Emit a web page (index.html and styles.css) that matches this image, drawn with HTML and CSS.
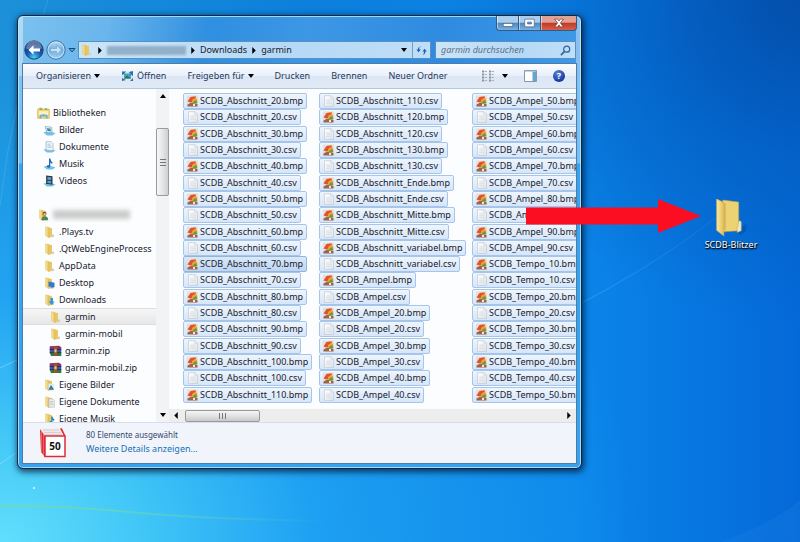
FILE: index.html
```html
<!DOCTYPE html>
<html lang="de">
<head>
<meta charset="utf-8">
<meta name="viewport" content="width=device-width, initial-scale=1">
<title>garmin</title>
<link rel="stylesheet" href="styles.css">
</head>
<body>
<svg class="defs" aria-hidden="true">
  <defs>
    <linearGradient id="gold" x1="0" x2="1"><stop offset="0" stop-color="#fbeaa0"/><stop offset="1" stop-color="#e3bd52"/></linearGradient>
    <linearGradient id="paper" x1="0" x2="1" y2="1"><stop offset="0" stop-color="#fff"/><stop offset="1" stop-color="#dfe5ec"/></linearGradient>
    <radialGradient id="back" cx=".5" cy=".9" r=".8"><stop offset="0" stop-color="#3fd4f8"/><stop offset=".45" stop-color="#1a5fb8"/><stop offset="1" stop-color="#16306f"/></radialGradient>
    <linearGradient id="fwd" y2="1" x2="0"><stop offset="0" stop-color="#bcdcf5"/><stop offset=".5" stop-color="#6aaee3"/><stop offset="1" stop-color="#a5d4f6"/></linearGradient>
    <linearGradient id="fade"><stop offset="0" stop-color="#74dca0" stop-opacity=".8"/><stop offset="1" stop-color="#74dca0" stop-opacity="0"/></linearGradient>
    <linearGradient id="fade2"><stop offset="0" stop-color="#5cc0f8" stop-opacity=".4"/><stop offset="1" stop-color="#5cc0f8" stop-opacity="0"/></linearGradient>
  </defs>
  <symbol id="folder" viewBox="0 0 12 12"><path d="M5 1.500l3.500.5V9l1.500.300V11L5 11.400z" fill="#e9c765"/><path d="M2 .8L5.500 1.600v10.200L2 9.600z" fill="url(#gold)" stroke="#d8b65c" stroke-width=".4"/><path d="M8 8.500h2.400v2.500H8z" fill="#cfd2c0"/></symbol>
  <symbol id="bmp" viewBox="0 0 12 12"><rect x=".5" y=".5" width="11" height="11" fill="#e4dfd8"/><path d="M1 6.500L4 2l5-.8 1.500 5L6 6.500l-2 1z" fill="#e3502d"/><path d="M5.500 5L9 2.500 11 6l-1 2H6z" fill="#f0a32c"/><path d="M6.500 7L9.500 5 11 8l-4 1z" fill="#5f9f3b"/><path d="M1 9.500L5 7.500l6 1.500v2.500H1z" fill="#9b654c"/><path d="M6.500 8.700h2v2.300h-2z" fill="#f7e7cf"/></symbol>
  <symbol id="csv" viewBox="0 0 12 12"><path d="M2 .7h6.500L11 3.200v8.200H2z" fill="url(#paper)" stroke="#c2c8cf" stroke-width=".7"/><path d="M8.300.8V3.400H11M3.600 5h5.600M3.600 6.800h5.600M3.600 8.600h5.600" fill="none" stroke="#cdd3da" stroke-width=".6"/></symbol>
  <symbol id="libs" viewBox="0 0 13 12"><path d="M.6 2.500L2 1h3l1 1h6.300v9.300H.6z" fill="#f1d574" stroke="#d0a848" stroke-width=".6"/><path d="M2 3l2-2 1.500 2zM7 2.500L9 .8 11 3z" fill="#77b267"/><path d="M1.800 4.200h9.400V8H1.800z" fill="#fbf1b9"/><path d="M2.600 11.500V9q0-1.800 4-1.800t4 1.800v2.500H9V9.600H4.200v1.900z" fill="#64b2df"/></symbol>
  <symbol id="pictures" viewBox="0 0 13 12"><path d="M.5 8.500L4.500 7l8 2-3 2.500H4z" fill="#70c0e8"/><path d="M2 2.500l6.500.7.600 5L4 8.600z" fill="#eaf4fa" stroke="#78a5c2" stroke-width=".7"/><path d="M3.600 4l4 .4.400 2.600-3.600-.2z" fill="#479bc7"/><path d="M4.300 7l1.700-1.400 2 1.600z" fill="#477f55"/></symbol>
  <symbol id="documents" viewBox="0 0 13 12"><path d="M.5 8.700L5 7.500l7.500 1.700-3 2.400H4z" fill="#70c0e8"/><path d="M3 .7h5l2 2v7L3 9z" fill="#f2f7fb" stroke="#8faebf" stroke-width=".7"/><path d="M4.400 3.200h3M4.400 4.800H8.500M4.400 6.400H8.500" stroke="#86aac2" stroke-width=".6"/></symbol>
  <symbol id="music" viewBox="0 0 13 12"><path d="M.5 8.700L5 7.500l7.500 1.700-3 2.400H4z" fill="#70c0e8"/><path d="M6 .5h1.300Q7.500 2.500 9.600 4.600L9 6 7.300 4.200v4.300Q6.800 10 4.800 9.600 3 8.800 4.200 7.600 5 7 6 7.300z" fill="#1e69bd"/></symbol>
  <symbol id="videos" viewBox="0 0 13 12"><path d="M.5 8.700L5 7.500l7.500 1.700-3 2.400H4z" fill="#70c0e8"/><path d="M3 .5l6.500.8v8.500L3 8.700z" fill="#26333f"/><path d="M4.400 1.800l3.600.4v2.700l-3.600-.2zM4.400 5.600l3.600.3v2.500L4.400 8z" fill="#5d9dcb"/><path d="M3.600 1.400v7M8.900 2v7" stroke="#a6b5c2" stroke-width=".5" stroke-dasharray=".7"/></symbol>
  <symbol id="user" viewBox="0 0 12 12"><use href="#folder"/><circle cx="7" cy="4.800" r="2" fill="#7a5637"/><circle cx="7.200" cy="5.300" r="1.200" fill="#e7b688"/><path d="M4 11.200q0-4 3.200-4t3.600 4z" fill="#4a8754"/></symbol>
  <symbol id="f-desktop" viewBox="0 0 12 12"><use href="#folder"/><path d="M5 4.500l6 1.200v4.600L5 9.500z" fill="#3676cb"/><path d="M7 10h3v1.300H7z" fill="#6ba5e0"/></symbol>
  <symbol id="f-down" viewBox="0 0 12 12"><use href="#folder"/><path d="M7 4h2.400v3.500H11L8.200 11 5.200 7.500H7z" fill="#2a93e2"/></symbol>
  <symbol id="f-pic" viewBox="0 0 12 12"><use href="#folder"/><path d="M5 4.500l5.500.8v5.400H5z" fill="#dcebf2"/><path d="M5.500 9.800L7.500 6l3 4.700H5z" fill="#2f7998"/></symbol>
  <symbol id="f-doc" viewBox="0 0 12 12"><use href="#folder"/><path d="M5.500 3h4.200l1.300 1.500v6.700H5.500z" fill="#e9edef" stroke="#a9b4ba" stroke-width=".5"/><path d="M6.500 5.500h3.300M6.500 7h3.300M6.500 8.500h3.300" stroke="#9fafb8" stroke-width=".5"/></symbol>
  <symbol id="f-music" viewBox="0 0 12 12"><use href="#folder"/><path d="M7.800 3.600H9q.2 1.800 2 3L10.500 8 9 6.800V9.500q-.8 1.700-2.800 1-1-1.200.3-2.200.6-.3 1.300-.1z" fill="#1f7fcb"/></symbol>
  <symbol id="zip" viewBox="0 0 13 12"><path d="M.7 1.200L10 .8l2.300 1.500v2.200H.7z" fill="#8d3268"/><path d="M.7 4.600h11.600v3H.7z" fill="#3655b4"/><path d="M.7 7.700h11.600v3.200H2z" fill="#2d7a3c"/><path d="M.7 4.500h11.600M.7 7.600h11.600" stroke="#1d1d2b" stroke-width=".8"/><path d="M5 .9h3v10H5z" fill="#a2522a"/><path d="M5.500 4.300h2v3h-2z" fill="#e5ca73"/></symbol>
</svg>

<main class="desktop">
  <svg class="streaks" viewBox="0 0 800 542" preserveAspectRatio="none" aria-hidden="true">
    <path d="M582 303Q700 240 765 174" fill="none" stroke="url(#fade2)"/>
    <path d="M0 206Q12 100 48 0" fill="none" stroke="#8fdcf5" stroke-opacity=".2"/>
    <path d="M0 368L17 360M0 464L20 450" stroke="#a0eafa" stroke-opacity=".5"/>
    <path d="M0 506Q60 505 130 512T330 521" fill="none" stroke="url(#fade)" stroke-width="2"/>
    <path d="M720 542Q770 525 800 500V542z" fill="#2c92ee" fill-opacity=".15"/>
    <circle cx="34" cy="488" r="1" fill="#d5f8ff"/>
  </svg>

  <section class="window" aria-label="garmin">
    <header class="caption">
      <button class="cap" aria-label="Minimieren"><svg viewBox="0 0 22 14"><rect x="6.500" y="7.500" width="10" height="3" fill="#fff" stroke="#49627f" stroke-width=".7"/></svg></button>
      <button class="cap" aria-label="Maximieren"><svg viewBox="0 0 22 14"><path d="M6 3h10v8H6zM9 6v2h4V6z" fill="#fff" fill-rule="evenodd" stroke="#49627f" stroke-width=".7"/></svg></button>
      <button class="cap close" aria-label="Schließen"><svg viewBox="0 0 36 14"><path d="M14 3h3l1.500 2L20 3h3l-3 4 3 4h-3l-1.500-2L17 11h-3l3-4z" fill="#fff" stroke="#6a3434" stroke-width=".7"/></svg></button>
    </header>

    <nav class="navrow" aria-label="Navigation">
      <button class="round" aria-label="Zurück"><svg viewBox="0 0 20 20"><circle cx="10" cy="10" r="9.200" fill="url(#back)" stroke="#24446f"/><path d="M2 8.500a8 8 0 0 1 16 0q-8 3-16 0z" fill="#fff" fill-opacity=".32"/><path d="M4.500 10L9.500 5.200V8.500H16v3H9.500v3.300z" fill="#fff"/></svg></button>
      <button class="round" aria-label="Vorwärts"><svg viewBox="0 0 20 20"><circle cx="10" cy="10" r="9.200" fill="url(#fwd)" stroke="#45719c"/><circle cx="10" cy="10" r="8" fill="none" stroke="#d7ecfb" stroke-opacity=".7"/><path d="M15.500 10L10.500 5.200V8.500H4.500v3h6v3.300z" fill="#c7e2f6" stroke="#5e97c9" stroke-width=".5"/></svg></button>
      <button class="recent" aria-label="Verlauf"><svg viewBox="0 0 8 6"><path d="M1 1.500h6L4 5z" fill="#5ba6e2" stroke="#1d4a7c"/></svg></button>
      <div class="address">
        <svg class="ic"><use href="#folder"/></svg>
        <svg class="tri" viewBox="0 0 4 8"><path d="M0 0l4 4-4 4z"/></svg>
        <span class="smudge"></span>
        <svg class="tri" viewBox="0 0 4 8"><path d="M0 0l4 4-4 4z"/></svg>
        <button class="crumb">Downloads</button>
        <svg class="tri" viewBox="0 0 4 8"><path d="M0 0l4 4-4 4z"/></svg>
        <button class="crumb">garmin</button>
        <button class="drop" aria-label="Vorherige Orte"><svg class="caret" viewBox="0 0 6 4"><path d="M0 0h6L3 4z"/></svg></button>
        <button class="refresh" aria-label="Aktualisieren"><svg viewBox="0 0 12 12"><path d="M6 1.500Q3.500 1 3.500 5H5.200L2.800 8 .4 5h1.700Q2 1.500 6 1.500zM6.500 10.500q2.200.3 2.200-3.500H7L9.400 4l2.400 3h-1.700q0 4-3.600 3.500z" fill="#1e5fb0"/></svg></button>
      </div>
      <label class="search"><input type="search" placeholder="garmin durchsuchen" aria-label="garmin durchsuchen"><svg viewBox="0 0 12 12"><circle cx="7.300" cy="4.500" r="3.300" fill="none" stroke="#28649f" stroke-width="1.300"/><path d="M5 7L1 11" stroke="#28649f" stroke-width="1.800"/></svg></label>
    </nav>

    <div class="client">
      <div class="toolbar" role="toolbar">
        <button>Organisieren <svg class="caret" viewBox="0 0 6 4"><path d="M0 0h6L3 4z"/></svg></button>
        <button><svg class="ic open" viewBox="0 0 13 12"><path d="M1 1.500h11v8H1z" fill="#cfe6f3"/><path d="M1 1.500h4L3 4 1 5zM12 1v5L9 4 8 2zM1 11V8l4 2zM9 11l3-3v3z" fill="#2a6fae"/><path d="M3 3.500h7v5H3z" fill="#4d9cc6"/><path d="M3 8.500l3-3 4 3z" fill="#2c7448"/></svg>Öffnen</button>
        <button>Freigeben für <svg class="caret" viewBox="0 0 6 4"><path d="M0 0h6L3 4z"/></svg></button>
        <button>Drucken</button>
        <button>Brennen</button>
        <button>Neuer Ordner</button>
        <div class="tools">
          <button aria-label="Ansicht ändern"><svg class="view" viewBox="0 0 14 12"><path d="M1 1.500h2M1 4.500h2M1 7.500h2M1 10.500h2M8 1.500h2M8 4.500h2M8 7.500h2M8 10.500h2" stroke="#8b96a1" stroke-width="2"/><path d="M3.500 1.500H6M3.500 4.500H6M3.500 7.500H6M3.500 10.500H6M10.500 1.500H13M10.500 4.500H13M10.500 7.500H13M10.500 10.500H13" stroke="#a8b0b9"/></svg><svg class="caret" viewBox="0 0 6 4"><path d="M0 0h6L3 4z"/></svg></button>
          <button aria-label="Vorschaufenster"><svg class="pane" viewBox="0 0 13 12"><path d="M.5.500h12v11H.5z" fill="#fff" stroke="#8898a8"/><path d="M8.500 1.500H12V11H8.500z" fill="#63a6cd"/><path d="M.5 1h12" stroke="#8ba9c4"/></svg></button>
          <button aria-label="Hilfe" class="help"><span>?</span></button>
        </div>
      </div>

      <div class="body">
        <aside class="side">
          <ul class="tree">
            <li class="l0"><svg class="ic"><use href="#libs"/></svg>Bibliotheken</li>
            <li><svg class="ic"><use href="#pictures"/></svg>Bilder</li>
            <li><svg class="ic"><use href="#documents"/></svg>Dokumente</li>
            <li><svg class="ic"><use href="#music"/></svg>Musik</li>
            <li><svg class="ic"><use href="#videos"/></svg>Videos</li>
          </ul>
          <ul class="tree">
            <li class="l0"><svg class="ic"><use href="#user"/></svg><span class="smudge"></span></li>
            <li><svg class="ic"><use href="#folder"/></svg>.Plays.tv</li>
            <li><svg class="ic"><use href="#folder"/></svg>.QtWebEngineProcess</li>
            <li><svg class="ic"><use href="#folder"/></svg>AppData</li>
            <li><svg class="ic"><use href="#f-desktop"/></svg>Desktop</li>
            <li><svg class="ic"><use href="#f-down"/></svg>Downloads</li>
            <li class="l2 current"><svg class="ic"><use href="#folder"/></svg>garmin</li>
            <li class="l2"><svg class="ic"><use href="#folder"/></svg>garmin-mobil</li>
            <li class="l2"><svg class="ic"><use href="#zip"/></svg>garmin.zip</li>
            <li class="l2"><svg class="ic"><use href="#zip"/></svg>garmin-mobil.zip</li>
            <li><svg class="ic"><use href="#f-pic"/></svg>Eigene Bilder</li>
            <li><svg class="ic"><use href="#f-doc"/></svg>Eigene Dokumente</li>
            <li><svg class="ic"><use href="#f-music"/></svg>Eigene Musik</li>
          </ul>
        </aside>
        <div class="vbar" aria-hidden="true">
          <svg class="arr" viewBox="0 0 6 4"><path d="M0 4h6L3 0z"/></svg>
          <div class="vtrack"><div class="vthumb"><svg viewBox="0 0 6 7"><path d="M0 .5h6M0 3.500h6M0 6.500h6" stroke="#777"/></svg></div></div>
          <svg class="arr" viewBox="0 0 6 4"><path d="M0 0h6L3 4z"/></svg>
        </div>
        <div class="listing">
          <ul class="files">
            <li><svg class="ic"><use href="#bmp"/></svg>SCDB_Abschnitt_20.bmp</li>
            <li><svg class="ic"><use href="#csv"/></svg>SCDB_Abschnitt_20.csv</li>
            <li><svg class="ic"><use href="#bmp"/></svg>SCDB_Abschnitt_30.bmp</li>
            <li><svg class="ic"><use href="#csv"/></svg>SCDB_Abschnitt_30.csv</li>
            <li><svg class="ic"><use href="#bmp"/></svg>SCDB_Abschnitt_40.bmp</li>
            <li><svg class="ic"><use href="#csv"/></svg>SCDB_Abschnitt_40.csv</li>
            <li><svg class="ic"><use href="#bmp"/></svg>SCDB_Abschnitt_50.bmp</li>
            <li><svg class="ic"><use href="#csv"/></svg>SCDB_Abschnitt_50.csv</li>
            <li><svg class="ic"><use href="#bmp"/></svg>SCDB_Abschnitt_60.bmp</li>
            <li><svg class="ic"><use href="#csv"/></svg>SCDB_Abschnitt_60.csv</li>
            <li class="focus"><svg class="ic"><use href="#bmp"/></svg>SCDB_Abschnitt_70.bmp</li>
            <li><svg class="ic"><use href="#csv"/></svg>SCDB_Abschnitt_70.csv</li>
            <li><svg class="ic"><use href="#bmp"/></svg>SCDB_Abschnitt_80.bmp</li>
            <li><svg class="ic"><use href="#csv"/></svg>SCDB_Abschnitt_80.csv</li>
            <li><svg class="ic"><use href="#bmp"/></svg>SCDB_Abschnitt_90.bmp</li>
            <li><svg class="ic"><use href="#csv"/></svg>SCDB_Abschnitt_90.csv</li>
            <li><svg class="ic"><use href="#bmp"/></svg>SCDB_Abschnitt_100.bmp</li>
            <li><svg class="ic"><use href="#csv"/></svg>SCDB_Abschnitt_100.csv</li>
            <li><svg class="ic"><use href="#bmp"/></svg>SCDB_Abschnitt_110.bmp</li>
            <li><svg class="ic"><use href="#csv"/></svg>SCDB_Abschnitt_110.csv</li>
            <li><svg class="ic"><use href="#bmp"/></svg>SCDB_Abschnitt_120.bmp</li>
            <li><svg class="ic"><use href="#csv"/></svg>SCDB_Abschnitt_120.csv</li>
            <li><svg class="ic"><use href="#bmp"/></svg>SCDB_Abschnitt_130.bmp</li>
            <li><svg class="ic"><use href="#csv"/></svg>SCDB_Abschnitt_130.csv</li>
            <li><svg class="ic"><use href="#bmp"/></svg>SCDB_Abschnitt_Ende.bmp</li>
            <li><svg class="ic"><use href="#csv"/></svg>SCDB_Abschnitt_Ende.csv</li>
            <li><svg class="ic"><use href="#bmp"/></svg>SCDB_Abschnitt_Mitte.bmp</li>
            <li><svg class="ic"><use href="#csv"/></svg>SCDB_Abschnitt_Mitte.csv</li>
            <li><svg class="ic"><use href="#bmp"/></svg>SCDB_Abschnitt_variabel.bmp</li>
            <li><svg class="ic"><use href="#csv"/></svg>SCDB_Abschnitt_variabel.csv</li>
            <li><svg class="ic"><use href="#bmp"/></svg>SCDB_Ampel.bmp</li>
            <li><svg class="ic"><use href="#csv"/></svg>SCDB_Ampel.csv</li>
            <li><svg class="ic"><use href="#bmp"/></svg>SCDB_Ampel_20.bmp</li>
            <li><svg class="ic"><use href="#csv"/></svg>SCDB_Ampel_20.csv</li>
            <li><svg class="ic"><use href="#bmp"/></svg>SCDB_Ampel_30.bmp</li>
            <li><svg class="ic"><use href="#csv"/></svg>SCDB_Ampel_30.csv</li>
            <li><svg class="ic"><use href="#bmp"/></svg>SCDB_Ampel_40.bmp</li>
            <li><svg class="ic"><use href="#csv"/></svg>SCDB_Ampel_40.csv</li>
            <li><svg class="ic"><use href="#bmp"/></svg>SCDB_Ampel_50.bmp</li>
            <li><svg class="ic"><use href="#csv"/></svg>SCDB_Ampel_50.csv</li>
            <li><svg class="ic"><use href="#bmp"/></svg>SCDB_Ampel_60.bmp</li>
            <li><svg class="ic"><use href="#csv"/></svg>SCDB_Ampel_60.csv</li>
            <li><svg class="ic"><use href="#bmp"/></svg>SCDB_Ampel_70.bmp</li>
            <li><svg class="ic"><use href="#csv"/></svg>SCDB_Ampel_70.csv</li>
            <li><svg class="ic"><use href="#bmp"/></svg>SCDB_Ampel_80.bmp</li>
            <li><svg class="ic"><use href="#csv"/></svg>SCDB_Ampel_80.csv</li>
            <li><svg class="ic"><use href="#bmp"/></svg>SCDB_Ampel_90.bmp</li>
            <li><svg class="ic"><use href="#csv"/></svg>SCDB_Ampel_90.csv</li>
            <li><svg class="ic"><use href="#bmp"/></svg>SCDB_Tempo_10.bmp</li>
            <li><svg class="ic"><use href="#csv"/></svg>SCDB_Tempo_10.csv</li>
            <li><svg class="ic"><use href="#bmp"/></svg>SCDB_Tempo_20.bmp</li>
            <li><svg class="ic"><use href="#csv"/></svg>SCDB_Tempo_20.csv</li>
            <li><svg class="ic"><use href="#bmp"/></svg>SCDB_Tempo_30.bmp</li>
            <li><svg class="ic"><use href="#csv"/></svg>SCDB_Tempo_30.csv</li>
            <li><svg class="ic"><use href="#bmp"/></svg>SCDB_Tempo_40.bmp</li>
            <li><svg class="ic"><use href="#csv"/></svg>SCDB_Tempo_40.csv</li>
            <li><svg class="ic"><use href="#bmp"/></svg>SCDB_Tempo_50.bmp</li>
          </ul>
          <div class="hbar" aria-hidden="true">
            <svg class="tri" viewBox="0 0 4 8"><path d="M4 0L0 4l4 4z"/></svg>
            <div class="htrack"><div class="hthumb"><svg viewBox="0 0 7 6"><path d="M.5 0v6M3.500 0v6M6.500 0v6" stroke="#777"/></svg></div></div>
            <svg class="tri" viewBox="0 0 4 8"><path d="M0 0l4 4-4 4z"/></svg>
          </div>
        </div>
      </div>

      <footer class="details">
        <svg class="stack" viewBox="0 0 26 30" aria-hidden="true"><path d="M0 1l5 7v21l-4-5z" fill="#e02a35"/><path d="M1 1l19-.5L25 8H6z" fill="#f0e9e9"/><path d="M3 2h16M4 4.500h17M5 6.500h17" stroke="#cfc9cb" stroke-width=".8"/><path d="M1.500 3v21M3.500 5.500v21" stroke="#f48a8d" stroke-width=".6"/><path d="M20 .5l2-.3L25.500 8H24z" fill="#e02a35"/><rect x="5" y="8" width="20" height="20.500" fill="#fff" stroke="#e02a35" stroke-width="1.500"/><text x="15" y="22" text-anchor="middle">50</text></svg>
        <div>
          <p>80 Elemente ausgewählt</p>
          <a href="#">Weitere Details anzeigen...</a>
        </div>
      </footer>
    </div>
  </section>

  <figure class="shortcut">
    <svg viewBox="0 0 32 38" aria-hidden="true"><path d="M22 32l9-7v7l-6 4z" fill="#043b7d" fill-opacity=".35"/><path d="M8 2l15.500 2v28L8 33z" fill="#edd272" stroke="#b99a4c" stroke-width=".6"/><path d="M23.500 22l2.500 1v9l-4 1.500V30z" fill="#ece6c2" stroke="#b4a060" stroke-width=".5"/><path d="M10 5v26" stroke="#c9a951" stroke-width="2" stroke-opacity=".6"/><path d="M2 1l7 3.500V37l-7-5.500z" fill="url(#gold)" stroke="#ceb067" stroke-width=".6"/></svg>
    <figcaption>SCDB-Blitzer</figcaption>
  </figure>

  <svg class="arrow" viewBox="0 0 175 34" aria-hidden="true"><path d="M0 8.500h132V0l43 17-43 17V25.500H0z" fill="#fb0d22"/></svg>
</main>
</body>
</html>
```

FILE: styles.css
```css
* { box-sizing: border-box; }
body {
  margin: 0;
  font: 9px/16px "Noto Sans", "Open Sans", sans-serif;
  color: #17202c;
}
ul, p, figure { margin: 0; padding: 0; }
ul { list-style: none; }
button {
  display: flex;
  align-items: center;
  padding: 0;
  border: 0;
  background: none;
  font: inherit;
  color: inherit;
  white-space: nowrap;
}
svg { display: block; flex: none; }
.defs { position: absolute; width: 0; height: 0; }
.ic { width: 13px; height: 12px; }
.tri { width: 4px; height: 7px; }
.caret { width: 6px; height: 4px; }

.desktop {
  position: relative;
  min-height: 100vh;
  overflow: hidden;
  background:
    radial-gradient(ellipse 80% 90% at 0% 100%, #62dffc 0%, rgba(70, 205, 250, .9) 22%, rgba(35, 170, 250, .75) 50%, rgba(20, 150, 250, 0) 100%),
    radial-gradient(ellipse 45% 60% at 100% 0%, rgba(3, 78, 170, .95) 0%, rgba(3, 92, 190, .6) 50%, rgba(3, 100, 200, 0) 100%),
    linear-gradient(90deg, #1c90d8 0%, #0c7fdc 40%, #0b86ea 72%, #0469d8 100%);
}
.streaks { position: absolute; inset: 0; width: 100%; height: 100%; }

.window {
  position: absolute;
  left: 17px;
  top: 15px;
  width: 565px;
  display: flex;
  flex-direction: column;
  padding: 0 4px 4px;
  border: 1px solid #12283f;
  border-radius: 6px;
  background:
    linear-gradient(180deg, rgba(255, 255, 255, .4) 0, rgba(255, 255, 255, .3) 147px, rgba(255, 255, 255, 0) 148px) 0 0 / 5px 100% no-repeat,
    linear-gradient(180deg, rgba(255, 255, 255, .4) 0, rgba(255, 255, 255, .3) 147px, rgba(255, 255, 255, 0) 148px) 100% 0 / 5px 100% no-repeat,
    linear-gradient(100deg, #7cc1ef 0, #69b5ec 90px, #2f8fe0 190px, #3d97e4 290px, #2e8be0 420px, #3f9ae9 100%) 0 0 / 100% 60px no-repeat,
    #35a3f0;
  box-shadow: inset 0 0 0 1px rgba(190, 232, 255, .8), 1px 2px 6px 1px rgba(0, 20, 50, .75);
}
.caption { display: flex; justify-content: flex-end; height: 25px; }
.cap {
  width: 22px;
  height: 15px;
  border: 1px solid #35597f;
  border-top: 0;
  border-right: 0;
  background: linear-gradient(#a9cdee 0 45%, #4c86bd 50%, #79b1e2);
  box-shadow: inset 1px 0 rgba(255, 255, 255, .5);
}
.cap:first-child { border-radius: 0 0 0 4px; }
.cap svg { width: 100%; height: 100%; }
.close {
  width: 37px;
  border-right: 1px solid #35597f;
  border-radius: 0 0 4px 0;
  background: linear-gradient(#e2a195 0 45%, #bf3a26 50%, #d8614a);
}

.navrow { display: flex; align-items: center; height: 18px; gap: 2px; padding: 0 1px 0 2px; margin-bottom: 4px; }
.round svg { width: 20px; height: 20px; }
.recent svg { width: 8px; height: 6px; }
.address, .search {
  display: flex;
  align-items: center;
  height: 18px;
  border: 1px solid #5b8fbf;
  background: linear-gradient(90deg, #cbe5f8, #b5d9f6 60%, #bfdef7);
}
.address { flex: 1; gap: 5px; padding-left: 1px; }
.address .smudge { width: 79px; background: #93b0c9; height: 9px; filter: blur(1px); }
.drop { margin-left: auto; }
.refresh { justify-content: center; width: 18px; height: 16px; border-left: 1px solid #6f9fca; }
.refresh svg { width: 11px; height: 11px; }
.search { width: 141px; margin-left: 2px; padding: 0 4px 0 5px; }
.search input {
  flex: 1;
  min-width: 0;
  padding: 0;
  border: 0;
  outline: 0;
  background: none;
  font: inherit;
  font-style: italic;
}
.search input::placeholder { color: #5c7185; opacity: 1; }
.search svg { width: 11px; height: 11px; }

.client { border: 1px solid #4d7ca6; background: #fcfdfe; }
.toolbar {
  display: flex;
  align-items: center;
  gap: 21px;
  height: 25px;
  padding: 0 11px 0 13px;
  border-bottom: 1px solid #b7c7da;
  background: linear-gradient(#fbfdff, #e9f0fa 48%, #dce6f4 52%, #e0eaf7);
  color: #1e395b;
}
.toolbar button { gap: 3px; }
.tools { display: flex; align-items: center; gap: 16px; margin-left: auto; }
.tools button:first-child { gap: 7px; }
.view { width: 14px; height: 12px; }
.pane { width: 13px; height: 12px; }
.toolbar .help {
  justify-content: center;
  width: 12px;
  height: 12px;
  border-radius: 50%;
  background: radial-gradient(circle at 40% 30%, #5b86da, #163a9c 70%);
  color: #fff;
  font-weight: 700;
  line-height: 12px;
}

.body { display: flex; height: 333px; }
.side { width: 133px; padding-top: 15px; overflow: hidden; }
.tree + .tree { margin-top: 17px; }
.tree li {
  display: flex;
  align-items: center;
  gap: 3px;
  height: 17px;
  padding-left: 20px;
  white-space: nowrap;
}
.tree .l0 { padding-left: 14px; }
.tree .l2 { padding-left: 26px; }
.tree .current { border: solid #dedede; border-width: 1px 0; background: linear-gradient(#f6f6f6, #e7e7e7); }
.tree .smudge { width: 77px; height: 9px; background: #cbcbcb; filter: blur(2px); }
.vbar { display: flex; flex-direction: column; align-items: center; width: 13px; padding: 5px 0; background: #f2f3f4; }
.vbar .arr { width: 6px; height: 4px; }
.vtrack { flex: 1; width: 100%; padding-top: 30px; }
.vthumb, .hthumb {
  display: flex;
  align-items: center;
  justify-content: center;
  border: 1px solid #9a9a9a;
  border-radius: 2px;
}
.vthumb { height: 68px; background: linear-gradient(90deg, #f7f7f7, #e6e6e6 50%, #cfcfd2); }
.vthumb svg { width: 6px; height: 7px; }
.listing { flex: 1; min-width: 0; display: flex; flex-direction: column; }
.files {
  flex: 1;
  display: grid;
  grid-auto-flow: column;
  grid-template-rows: repeat(19, 1fr);
  grid-template-columns: 136px 153px max-content;
  justify-items: start;
  padding: 4px 0 6px 14px;
  overflow: hidden;
}
.files li {
  display: flex;
  align-items: center;
  gap: 1px;
  height: 16px;
  padding: 0 3px 0 2px;
  border: 1px solid #a5c6ea;
  border-radius: 2px;
  background: linear-gradient(#eef5fd, #d6e6f9);
  white-space: nowrap;
}
.files .focus { border-color: #93b4dc; background: linear-gradient(#dbe9f9, #bdd5f2); }
.hbar { display: flex; align-items: center; height: 13px; padding: 0 5px; background: #ededee; }
.htrack { flex: 1; padding-left: 7px; }
.hthumb { width: 75px; height: 12px; background: linear-gradient(#f5f5f5, #e2e2e2 50%, #c9c9cc); }
.hthumb svg { width: 7px; height: 6px; }

.details {
  display: flex;
  gap: 20px;
  height: 41px;
  padding: 5px 0 0 17px;
  border-top: 1px solid #d5deea;
  background: #f1f5fb;
  line-height: 14px;
}
.stack { width: 26px; height: 30px; }
.stack text { font: 700 10px "Open Sans", sans-serif; fill: #111; }
.details p { color: #33496b; font-size: 8px; }
.details a { color: #1670b4; text-decoration: none; }

.shortcut {
  position: absolute;
  left: 696px;
  top: 198px;
  width: 70px;
  display: flex;
  flex-direction: column;
  align-items: center;
  color: #fff;
  text-shadow: 0 1px 2px #000, 1px 1px 1px #000;
}
.shortcut svg { width: 34px; height: 39px; }
.arrow { position: absolute; left: 526px; top: 199px; width: 175px; height: 34px; }
```
